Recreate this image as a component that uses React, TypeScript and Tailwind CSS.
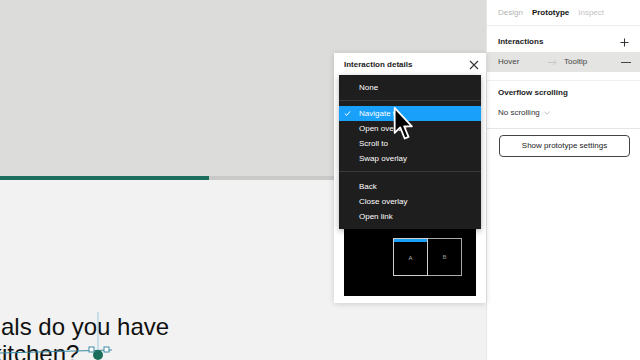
const menuTop = ['Navigate to', 'Open overlay', 'Scroll to', 'Swap overlay']
const menuBottom = ['Back', 'Close overlay', 'Open link']

const Cursor = (): JSX.Element => (
  <svg className="absolute left-[393px] top-[106px]" width="20" height="35" viewBox="0 0 18 31">
    <path
      d="M1.5 1.5 L1.5 24 L6.5 19 L10.5 29 L14 27.5 L10 18 L17 18 Z"
      fill="#000"
      stroke="#fff"
      strokeWidth="1.6"
      strokeLinejoin="round"
    />
  </svg>
)

const App = (): JSX.Element => {
  return (
    <div className="relative w-[640px] h-[360px] overflow-hidden flex font-['Liberation_Sans',Arial,sans-serif] text-[8px] text-[#222]">
      {/* canvas */}
      <div className="flex-1 flex flex-col">
        <div className="h-[176px] bg-[#dcdcda]" />
        <div className="h-[4px] flex">
          <div className="w-[209px] bg-[#1b6e5c]" />
          <div className="flex-1 bg-[#c9c9c7]" />
        </div>
        <div className="relative flex-1 bg-[#f2f2f2] pt-[133px] overflow-hidden text-[24px] leading-[27px] text-[#111]">
          <div className="ml-[1px] whitespace-nowrap">als do you have</div>
          <div className="ml-[-10px] whitespace-nowrap">kitchen?</div>
          <svg className="absolute left-0 top-[130px]" width="120" height="50">
            <line x1="98" y1="2" x2="98" y2="40" stroke="#9cc9d9" strokeWidth="1" />
            <line x1="0" y1="43" x2="112" y2="40" stroke="#3a8ca3" strokeWidth="1.2" />
            <rect x="89" y="37" width="5" height="5" fill="#fff" stroke="#3a8ca3" strokeWidth="1" />
            <rect x="104" y="37" width="5" height="5" fill="#fff" stroke="#3a8ca3" strokeWidth="1" />
            <circle cx="98" cy="45" r="5" fill="#1b6e5c" />
          </svg>
        </div>
      </div>

      {/* right panel */}
      <div className="w-[154px] bg-white border-l border-[#e6e6e6] flex flex-col">
        <div className="h-[26px] flex items-center gap-[9px] px-[11px] border-b border-[#ececec]">
          <span className="text-[#b3b3b3]">Design</span>
          <span className="font-bold text-[#111]">Prototype</span>
          <span className="text-[#c4c4c4]">Inspect</span>
        </div>
        <div className="h-[26px] pt-[6px] flex items-center justify-between pl-[11px] pr-[11px]">
          <span className="font-bold text-[#222]">Interactions</span>
          <svg width="9" height="9" viewBox="0 0 9 9">
            <path d="M4.5 0.5 V8.5 M0.5 4.5 H8.5" stroke="#333" strokeWidth="1" />
          </svg>
        </div>
        <div className="h-[20px] bg-[#e4e4e3] flex items-center pl-[11px] pr-[9px] text-[#444]">
          <span className="w-[50px]">Hover</span>
          <span className="w-[16px] flex items-center">
            <svg width="9" height="7" viewBox="0 0 9 7">
              <path d="M0 3.5 H8 M5.5 1 L8 3.5 L5.5 6" fill="none" stroke="#c4c4c4" strokeWidth="0.9" />
            </svg>
          </span>
          <span>Tooltip</span>
          <span className="ml-auto w-[10px] h-px bg-[#444]" />
        </div>
        <div className="h-[9px] border-b border-[#f0f0f0]" />
        <div className="pt-[6px] pb-[9px] px-[11px] flex flex-col gap-[8px] border-b border-[#e6e6e6]">
          <div className="h-[12px] flex items-center font-bold text-[#222]">Overflow scrolling</div>
          <div className="h-[12px] flex items-center gap-[4px] text-[#333]">
            No scrolling
            <svg width="6" height="4" viewBox="0 0 6 4">
              <path d="M0.5 0.8 L3 3.2 L5.5 0.8" fill="none" stroke="#aaa" strokeWidth="0.8" />
            </svg>
          </div>
        </div>
        <div className="pt-[6px] ml-[12px] mr-[10px]">
          <div className="h-[22px] rounded-[4px] border border-[#444] flex items-center justify-center text-[#222]">
            Show prototype settings
          </div>
        </div>
      </div>

      {/* interaction details modal */}
      <div className="absolute left-[334px] top-[53px] w-[152px] h-[250px] bg-white shadow-[0_1px_6px_rgba(0,0,0,0.15)] flex flex-col">
        <div className="h-[23px] pt-px flex items-center justify-between pl-[10px] pr-[7px]">
          <span className="font-bold text-[#222]">Interaction details</span>
          <svg width="10" height="10" viewBox="0 0 10 10">
            <path d="M1 1 L9 9 M9 1 L1 9" stroke="#333" strokeWidth="1.1" />
          </svg>
        </div>
        <div className="mt-auto mx-[10px] mb-[7px] h-[100px] bg-black flex items-end justify-end pr-[14px] pb-[20px]">
          <div className="w-[35px] h-[38px] border border-[#cfcfcf] flex flex-col">
            <div className="h-[3px] bg-[#18a0fb]" />
            <div className="flex-1 flex items-center justify-center text-[6px] text-[#bbb]">A</div>
          </div>
          <div className="w-[34px] h-[38px] border border-l-0 border-[#aaa] flex items-center justify-center text-[6px] text-[#999]">
            B
          </div>
        </div>
      </div>

      {/* action dropdown */}
      <div className="absolute left-[339px] top-[75px] w-[142px] h-[154px] bg-[#1e1e1e] shadow-[0_2px_6px_rgba(0,0,0,0.3)] py-[5px] text-white">
        <div className="h-[15px] flex items-center pl-[20px]">None</div>
        <div className="py-[5px]">
          <div className="h-px bg-[#3b3b3b]" />
        </div>
        {menuTop.map((item, i) => (
          <div
            key={item}
            className={
              i === 0
                ? 'relative h-[15px] flex items-center pl-[20px] bg-[#18a0fb]'
                : 'h-[15px] flex items-center pl-[20px]'
            }
          >
            {i === 0 && (
              <svg className="absolute left-[5px] top-[4px]" width="7" height="7" viewBox="0 0 7 7">
                <path d="M0.8 3.6 L2.7 5.4 L6.2 1.4" fill="none" stroke="#fff" strokeWidth="1" />
              </svg>
            )}
            {item}
          </div>
        ))}
        <div className="pt-[5px] pb-[7px]">
          <div className="h-px bg-[#3b3b3b]" />
        </div>
        {menuBottom.map((item) => (
          <div key={item} className="h-[15px] flex items-center pl-[20px]">
            {item}
          </div>
        ))}
      </div>

      <Cursor />
    </div>
  )
}

export default App
